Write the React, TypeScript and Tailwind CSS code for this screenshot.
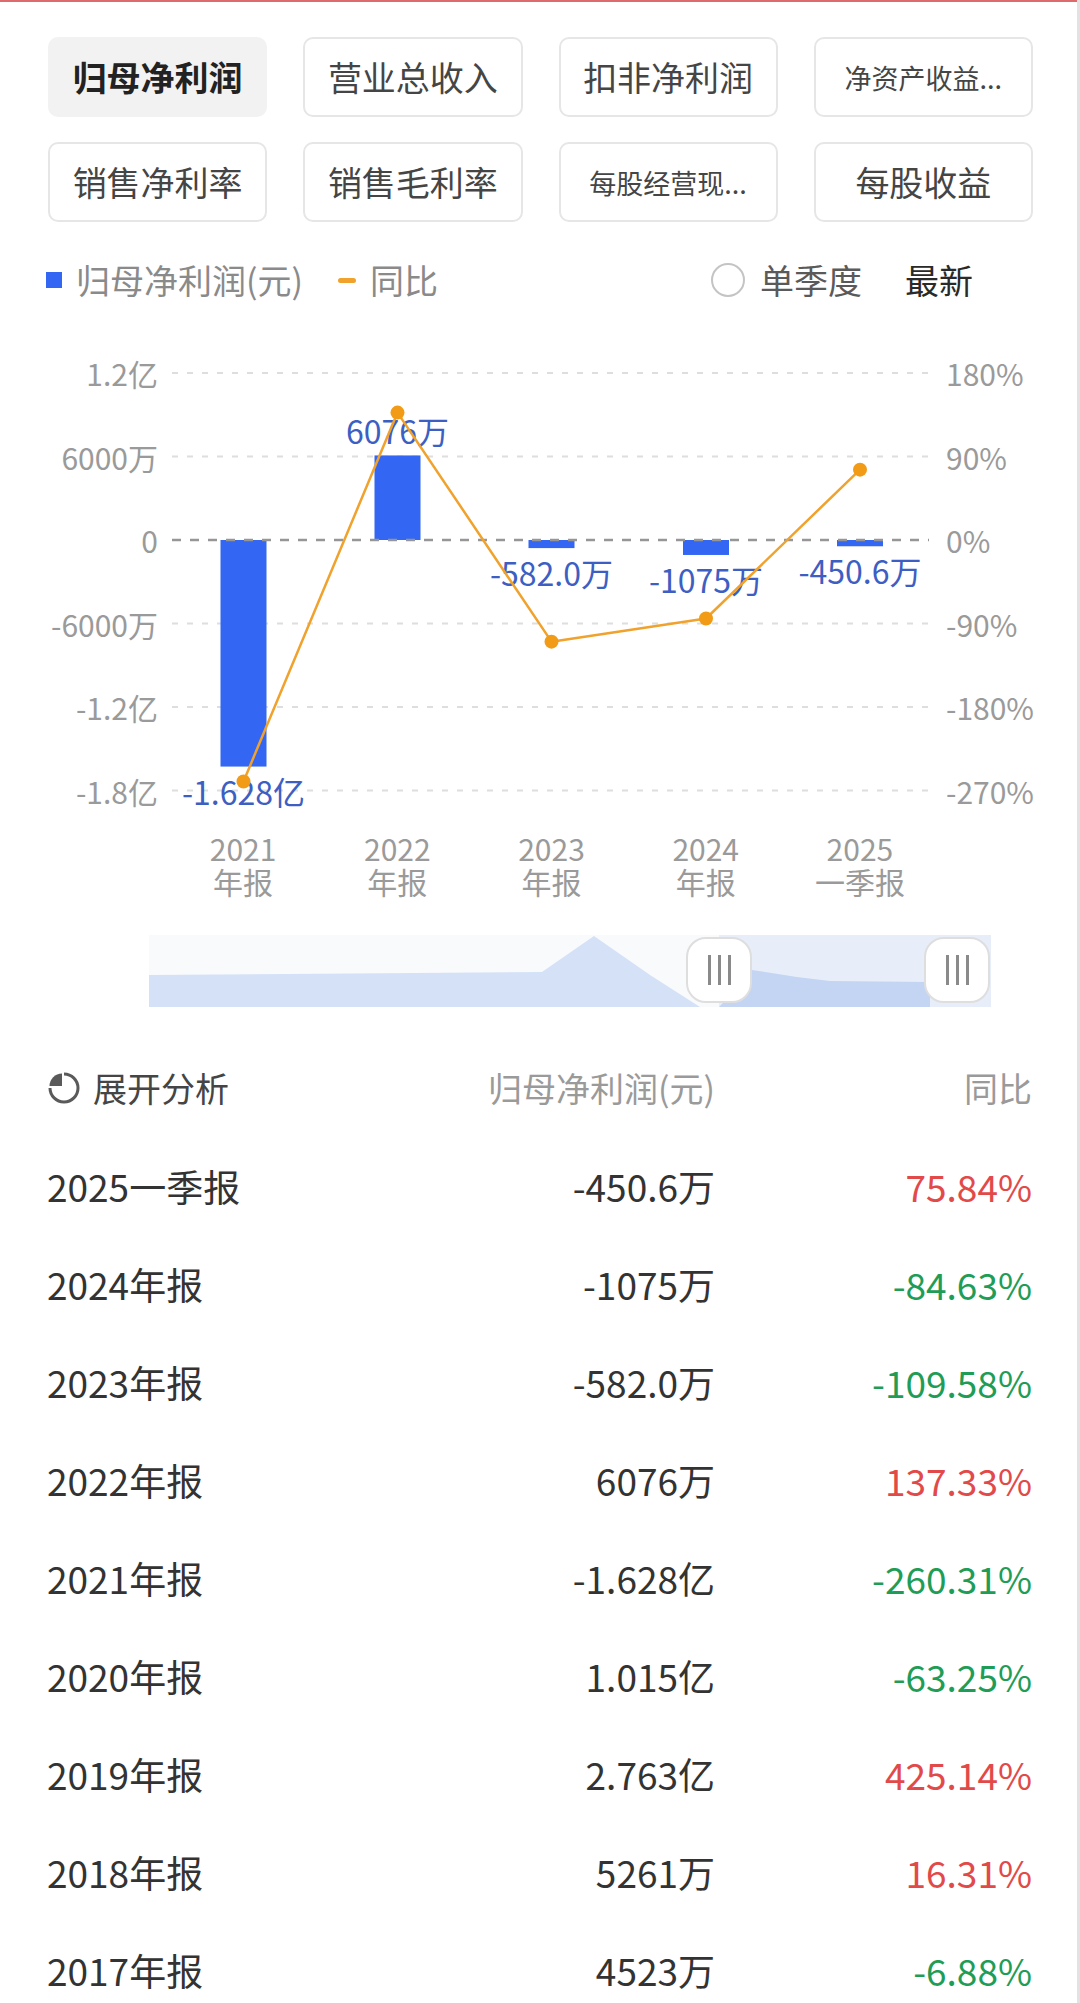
import React from "react";

const tabs = [
  { label: "归母净利润", active: true, small: false },
  { label: "营业总收入", active: false, small: false },
  { label: "扣非净利润", active: false, small: false },
  { label: "净资产收益...", active: false, small: true },
  { label: "销售净利率", active: false, small: false },
  { label: "销售毛利率", active: false, small: false },
  { label: "每股经营现...", active: false, small: true },
  { label: "每股收益", active: false, small: false },
];

const rows = [
  { p: "2025一季报", v: "-450.6万", y: "75.84%", up: true },
  { p: "2024年报", v: "-1075万", y: "-84.63%", up: false },
  { p: "2023年报", v: "-582.0万", y: "-109.58%", up: false },
  { p: "2022年报", v: "6076万", y: "137.33%", up: true },
  { p: "2021年报", v: "-1.628亿", y: "-260.31%", up: false },
  { p: "2020年报", v: "1.015亿", y: "-63.25%", up: false },
  { p: "2019年报", v: "2.763亿", y: "425.14%", up: true },
  { p: "2018年报", v: "5261万", y: "16.31%", up: true },
  { p: "2017年报", v: "4523万", y: "-6.88%", up: false },
];

const cx = [243.5, 397.5, 551.5, 706, 860];
const zero = 540;
const step = 83.5;
const bars = [-16280, 6076, -582, -1075, -450.6];
const barLabels = ["-1.628亿", "6076万", "-582.0万", "-1075万", "-450.6万"];
const yoy = [-260.31, 137.33, -109.58, -84.63, 75.84];
const xTop = ["2021", "2022", "2023", "2024", "2025"];
const xBot = ["年报", "年报", "年报", "年报", "一季报"];
const leftTicks = ["1.2亿", "6000万", "0", "-6000万", "-1.2亿", "-1.8亿"];
const rightTicks = ["180%", "90%", "0%", "-90%", "-180%", "-270%"];

function Chart() {
  const k = step / 6000;
  const yk = step / 90;
  const pts = yoy.map((v, i) => [cx[i], zero - v * yk]);
  return (
    <svg width="1080" height="532" viewBox="0 300 1080 532" className="block">
      {leftTicks.map((t, i) => {
        const y = zero + (i - 2) * step;
        return (
          <g key={t}>
            {i !== 2 && (
              <line x1="172" x2="929" y1={y} y2={y} stroke="#dedede" strokeWidth="2" strokeDasharray="6 9" />
            )}
            <text x="158" y={y} textAnchor="end" dominantBaseline="central" fontSize="30" fill="#9a9a9a">
              {t}
            </text>
            <text x="946" y={y} textAnchor="start" dominantBaseline="central" fontSize="30" fill="#9a9a9a">
              {rightTicks[i]}
            </text>
          </g>
        );
      })}
      {bars.map((v, i) => {
        const h = Math.abs(v) * k;
        const y = v >= 0 ? zero - h : zero;
        return <rect key={i} x={cx[i] - 23} y={y} width="46" height={h} fill="#3366f2" />;
      })}
      <line x1="172" x2="929" y1={zero} y2={zero} stroke="#969696" strokeWidth="2.5" strokeDasharray="9 9" />
      {bars.map((v, i) => {
        const h = Math.abs(v) * k;
        const y = v >= 0 ? zero - h - 25 : zero + h + 24;
        return (
          <text key={i} x={cx[i]} y={y} textAnchor="middle" dominantBaseline="central" fontSize="32" fill="#3d5ec2">
            {barLabels[i]}
          </text>
        );
      })}
      <polyline
        points={pts.map((p) => p.join(",")).join(" ")}
        fill="none"
        stroke="#f0a22c"
        strokeWidth="2.5"
        strokeLinejoin="round"
      />
      {pts.map((p, i) => (
        <circle key={i} cx={p[0]} cy={p[1]} r="7" fill="#f29b16" />
      ))}
    </svg>
  );
}

function Handle({ className }: { className: string }) {
  return (
    <div
      className={`absolute top-[2px] h-[66px] w-[66px] rounded-[20px] border-2 border-[#dedede] bg-white flex items-center justify-center gap-[7px] ${className}`}
    >
      <div className="w-[3px] h-[30px] bg-[#8a8a8a]" />
      <div className="w-[3px] h-[30px] bg-[#8a8a8a]" />
      <div className="w-[3px] h-[30px] bg-[#8a8a8a]" />
    </div>
  );
}

function Slider() {
  return (
    <div className="relative mt-[37px] ml-[149px] w-[842px] h-[72px]">
      <svg width="842" height="72" viewBox="149 935 842 72" className="block">
        <rect x="149" y="935" width="570" height="72" fill="#f9fafc" />
        <rect x="719" y="935" width="272" height="72" fill="#e8eef9" />
        <polygon points="149,1007 149,975 542,972 594,936 650,975 700,1007" fill="#d4e1f7" />
        <polygon points="719,1007 740,985 752,970 797,977 830,981 930,982 930,1007" fill="#c4d5f3" />
      </svg>
      <Handle className="left-[537px]" />
      <Handle className="left-[775px]" />
    </div>
  );
}

function PieIcon() {
  return (
    <svg width="34" height="34" viewBox="0 0 34 34">
      <path d="M17 3 A14 14 0 1 1 3 17" fill="none" stroke="#5a5a5a" strokeWidth="3" />
      <path d="M15 15 L15 2.5 A12.5 12.5 0 0 0 2.5 15 Z" fill="#5a5a5a" />
    </svg>
  );
}

export default function App() {
  return (
    <div className="w-[1080px] h-[2003px] bg-white overflow-hidden border-r-[3px] border-[#e2e2e2] font-['Noto_Sans_CJK_SC','Noto_Sans',sans-serif]">
      <div className="h-[2px] bg-[#de6b6b]" />
      <div className="mt-[35px] ml-[48px] w-[985px] grid grid-cols-4 gap-x-[36px] gap-y-[25px]">
        {tabs.map((t) => (
          <div
            key={t.label}
            className={`h-[80px] rounded-[10px] flex items-center justify-center leading-none ${
              t.active
                ? "bg-[#f2f2f2] text-[#222] font-bold border-2 border-[#f2f2f2]"
                : "bg-white text-[#454545] border-2 border-[#e6e6e6]"
            } ${t.small ? "text-[27px]" : "text-[34px]"}`}
          >
            {t.label}
          </div>
        ))}
      </div>

      <div className="mt-[38px] h-[40px] flex items-center pl-[46px] pr-[104px] text-[34px] leading-none">
        <div className="w-[16px] h-[16px] bg-[#3366f2]" />
        <span className="ml-[14px] text-[#8a8a8a]">归母净利润(元)</span>
        <div className="ml-[35px] w-[18px] h-[5px] rounded-full bg-[#f0a22c]" />
        <span className="ml-[14px] text-[#8a8a8a]">同比</span>
        <div className="flex-1" />
        <div className="w-[34px] h-[34px] rounded-full border-2 border-[#c4c4c4]" />
        <span className="ml-[15px] text-[#5a5a5a]">单季度</span>
        <span className="ml-[43px] text-[#2a2a2a]">最新</span>
      </div>

      <Chart />
      <div className="ml-[166px] w-[771px] grid grid-cols-5 text-[30px] leading-[33px] text-[#9a9a9a] text-center">
        {xTop.map((t, i) => (
          <div key={t}>
            {t}
            <br />
            {xBot[i]}
          </div>
        ))}
      </div>
      <Slider />

      <div className="mt-[32px] pl-[47px] pr-[45px]">
        <div className="h-[98px] flex items-center text-[34px] leading-none">
          <div className="flex-1 flex items-center gap-[12px] text-[#454545]">
            <PieIcon />
            <span>展开分析</span>
          </div>
          <div className="w-[302px] text-right text-[#9a9a9a]">归母净利润(元)</div>
          <div className="w-[317px] text-right text-[#9a9a9a]">同比</div>
        </div>
        {rows.map((r) => (
          <div key={r.p} className="h-[98px] flex items-center text-[37px] leading-none">
            <div className="flex-1 text-[#333]">{r.p}</div>
            <div className="w-[302px] text-right text-[#333]">{r.v}</div>
            <div className={`w-[317px] text-right ${r.up ? "text-[#e24a4a]" : "text-[#1f9d57]"}`}>{r.y}</div>
          </div>
        ))}
      </div>
    </div>
  );
}
